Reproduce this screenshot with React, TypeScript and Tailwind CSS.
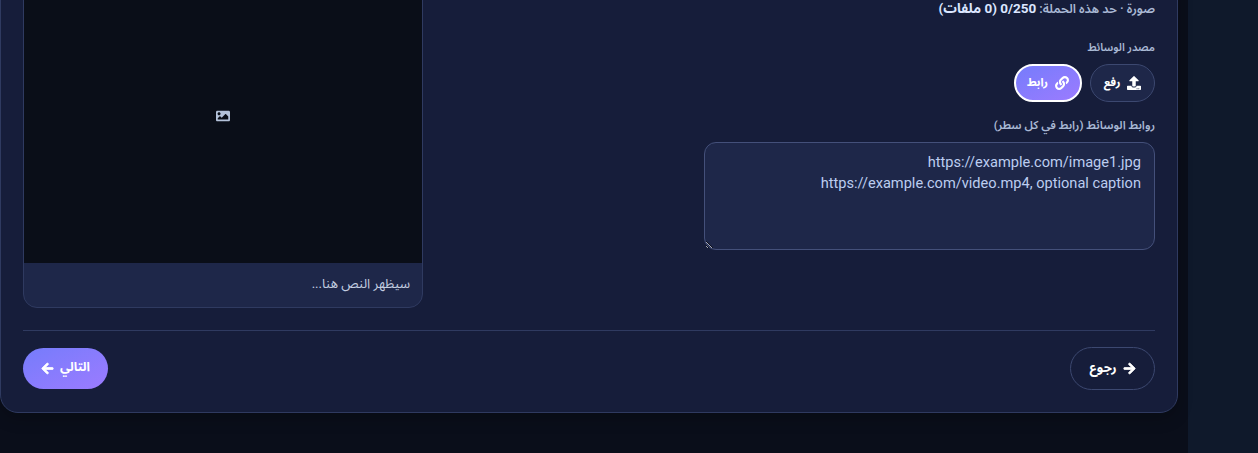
import { FaArrowLeft, FaArrowRight, FaImage, FaLink, FaUpload } from 'react-icons/fa'

const urls = 'https://example.com/image1.jpg\nhttps://example.com/video.mp4, optional caption'

function PreviewCard() {
  return (
    <div className="w-[400px] shrink-0 overflow-hidden rounded-[14px] border border-[#2f3a60] bg-[#1e2749]">
      <div className="flex h-[294px] items-center justify-center bg-[#0a0e18]">
        <FaImage className="text-[14px] text-[#b4c2da]" />
      </div>
      <div className="flex h-[44px] items-center px-3 pb-[2px] text-[13.2px] text-[#c3cde0]">سيظهر النص هنا...</div>
    </div>
  )
}

function MediaForm() {
  return (
    <div className="w-[451px] shrink-0 pt-[32px]">
      <p className="text-[12.5px] leading-[16px] font-semibold text-[#a9b8d4]">
        صورة · حد هذه الحملة: <strong className="text-[13.5px] font-bold text-[#dbe6ff]">0/250 (0 ملفات)</strong>
      </p>
      <label className="mt-[23px] block text-[11px] leading-[16px] font-semibold text-[#a9b8d4]">مصدر الوسائط</label>
      <div className="mt-[8px] flex gap-2">
        <button className="flex h-[38px] w-[65px] items-center justify-center gap-[7px] rounded-full border border-[#3c4870] bg-[#1e2749] text-[11.5px] font-bold text-white">
          <FaUpload className="text-[14px]" />
          رفع
        </button>
        <button className="flex h-[38px] w-[68px] items-center justify-center gap-[7px] rounded-full border-2 border-white bg-linear-to-br from-[#757cfb] to-[#9b7bff] text-[11.5px] font-bold text-white">
          <FaLink className="text-[14px]" />
          رابط
        </button>
      </div>
      <label className="mt-[15px] block text-[11.6px] leading-[16px] font-semibold text-[#a9b8d4]">
        روابط الوسائط (رابط في كل سطر)
      </label>
      <textarea
        dir="rtl"
        readOnly
        value={urls}
        className="mt-[9px] block h-[108px] w-full resize-y rounded-[12px] border border-[#44507a] bg-[#1e2749] px-[13px] py-[9px] text-right text-[14.6px] leading-[21px] text-[#bccdf0] outline-none"
      />
    </div>
  )
}

export default function App() {
  return (
    <div
      dir="rtl"
      className="flex h-[453px] w-[1258px] overflow-hidden bg-[#0a0e1a] font-['Roboto','Noto_Sans_Arabic','Noto_Sans','DejaVu_Sans',sans-serif]"
    >
      <aside className="h-full w-[70px] shrink-0 bg-[#0f192b]" />
      <main className="flex h-full min-w-0 flex-1 flex-col justify-end pr-[10px] pb-[40px]">
        <section className="shrink-0 rounded-[18px] border border-[#2f3a60] bg-[#161d3a] px-[22px] pb-[22px] shadow-[0_6px_16px_rgba(0,0,0,0.2)]">
          <div className="flex items-start justify-between">
            <MediaForm />
            <PreviewCard />
          </div>
          <div className="mt-[22px] flex items-center justify-between border-t border-[#2f3a60] pt-4">
            <button className="flex h-[43px] w-[85px] items-center justify-center gap-[6px] rounded-full border border-[#3c4870] pb-[2px] text-[13px] font-bold text-white">
              <FaArrowRight className="mt-[2px] text-[13px]" strokeWidth={30} stroke="currentColor" />
              رجوع
            </button>
            <button className="flex h-[41px] w-[85px] items-center justify-center gap-[6px] rounded-full bg-linear-to-br from-[#757cfb] to-[#9b7bff] pb-[2px] text-[12.5px] font-bold text-white">
              التالي
              <FaArrowLeft className="mt-[2px] text-[13px]" strokeWidth={30} stroke="currentColor" />
            </button>
          </div>
        </section>
      </main>
    </div>
  )
}
